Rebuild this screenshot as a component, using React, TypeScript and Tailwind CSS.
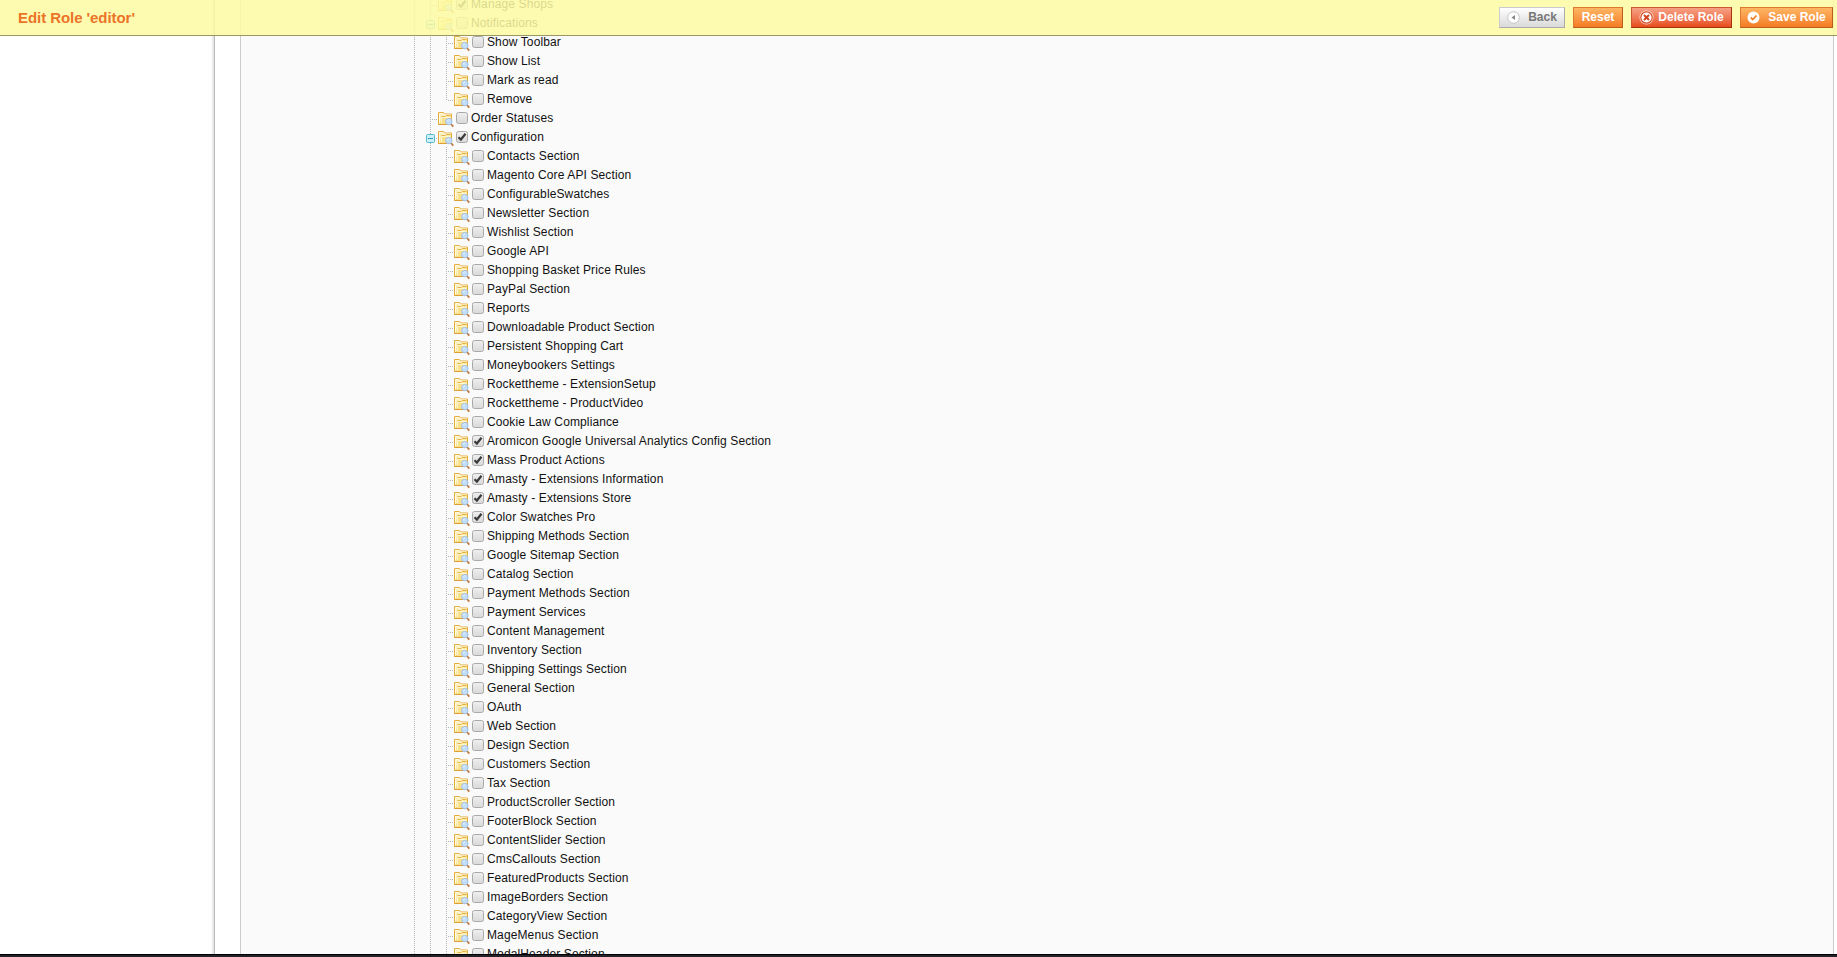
import * as React from "react";
import clsx from "clsx";

type Node = { label: string; level: 1 | 2; checked?: boolean; open?: boolean; last?: boolean };

const section = (label: string, checked = false): Node => ({ label, level: 2, checked });

const NODES: Node[] = [
  { label: "Manage Shops", level: 1, checked: true },
  { label: "Notifications", level: 1, open: true },
  section("Show Toolbar"),
  section("Show List"),
  section("Mark as read"),
  { label: "Remove", level: 2, last: true },
  { label: "Order Statuses", level: 1 },
  { label: "Configuration", level: 1, checked: true, open: true },
  section("Contacts Section"),
  section("Magento Core API Section"),
  section("ConfigurableSwatches"),
  section("Newsletter Section"),
  section("Wishlist Section"),
  section("Google API"),
  section("Shopping Basket Price Rules"),
  section("PayPal Section"),
  section("Reports"),
  section("Downloadable Product Section"),
  section("Persistent Shopping Cart"),
  section("Moneybookers Settings"),
  section("Rockettheme - ExtensionSetup"),
  section("Rockettheme - ProductVideo"),
  section("Cookie Law Compliance"),
  section("Aromicon Google Universal Analytics Config Section", true),
  section("Mass Product Actions", true),
  section("Amasty - Extensions Information", true),
  section("Amasty - Extensions Store", true),
  section("Color Swatches Pro", true),
  section("Shipping Methods Section"),
  section("Google Sitemap Section"),
  section("Catalog Section"),
  section("Payment Methods Section"),
  section("Payment Services"),
  section("Content Management"),
  section("Inventory Section"),
  section("Shipping Settings Section"),
  section("General Section"),
  section("OAuth"),
  section("Web Section"),
  section("Design Section"),
  section("Customers Section"),
  section("Tax Section"),
  section("ProductScroller Section"),
  section("FooterBlock Section"),
  section("ContentSlider Section"),
  section("CmsCallouts Section"),
  section("FeaturedProducts Section"),
  section("ImageBorders Section"),
  section("CategoryView Section"),
  section("MageMenus Section"),
  section("ModalHeader Section"),
];

/** Folder with a magnifier over its lower right corner. */
function FolderIcon() {
  return (
    <svg className="mt-[3px] h-4 w-4 shrink-0" viewBox="0 0 16 16" fill="none">
      <path d="M.5 12.500v-12h5l1 1.500h7v10.500z" fill="#fdf0bd" stroke="#e3ae3f" />
      <path d="M1.500 11.500v-10h3.500l1 1.500h6.500" stroke="#fffae3" />
      <path d="M1.500 12l2-7.500h9.500v7.500z" fill="#f9e08a" />
      <path d="M3.500 4.500h3.500l1-1h4.500" stroke="#e5b346" />
      <path d="M3.500 5.500h9M3.500 6v5" stroke="#fff6cf" />
      <path d="M.5 12.500h10" stroke="#dc9d31" />
      <path d="M13 12l2.300 2.600" stroke="#bd7b44" strokeWidth="1.800" />
      <circle cx="10.800" cy="9.600" r="3.200" fill="#c3def8" stroke="#a3c1e6" />
      <path d="M9.200 9.300a1.700 1.700 0 0 1 1.600-1.500" stroke="#ebf6ff" />
    </svg>
  );
}

function CheckBox({ checked }: { checked?: boolean }) {
  return (
    <span className="mt-[3px] ml-0.5 flex size-3 shrink-0 items-center justify-center rounded-[2.5px] border border-[#a9a9a9] bg-linear-to-b from-[#eee] to-[#dadada]">
      {checked && (
        <svg className="size-2.5 shrink-0" viewBox="0 0 10 10" fill="none">
          <path d="M1.500 5.200l2.400 2.300L8.500 1.700" stroke="#3a3a3a" strokeWidth="2.200" />
        </svg>
      )}
    </span>
  );
}

function Toggle() {
  return (
    <svg className="mt-[6px] -ml-1 h-[9px] w-[9px] shrink-0" viewBox="0 0 9 9" fill="none">
      <rect x=".5" y=".5" width="8" height="8" rx="1" fill="#cdf0f7" stroke="#55b9d0" />
      <path d="M2 4.500h5" stroke="#2e9db9" />
    </svg>
  );
}

/** Vertical dotted guide, one row high. Rows are odd in height, so the dots shift on every other one. */
function Guide({ half, odd }: { half?: boolean; odd: boolean }) {
  return (
    <span className={clsx("flex w-4 shrink-0", half ? "h-[11px]" : "h-[19px]")}>
      <svg className="h-full w-px" shapeRendering="crispEdges">
        <path d="M.5 0V19" stroke="#b4b4b4" strokeDasharray="1 1" strokeDashoffset={odd ? 1 : 0} />
      </svg>
    </span>
  );
}

function Dash({ short }: { short?: boolean }) {
  return (
    <svg
      className={clsx("mt-[10px] h-px shrink-0", short ? "ml-px w-px" : "ml-0.5 w-[5px]")}
      shapeRendering="crispEdges"
    >
      <path d="M0 .5H6" stroke="#b4b4b4" strokeDasharray="1 1" />
    </svg>
  );
}

function Row({ node, odd }: { node: Node; odd: boolean }) {
  return (
    <li className="flex h-[19px] items-start">
      <Guide odd={odd} />
      <Guide odd={odd} />
      {node.level === 2 && <Guide half={node.last} odd={odd} />}
      <span className="-ml-4 flex w-2 shrink-0">
        {node.open && <Toggle />}
        <Dash short={node.open} />
      </span>
      <FolderIcon />
      <CheckBox checked={node.checked} />
      <span className="ml-[3px] leading-[19px] tracking-[0.12px] whitespace-nowrap">{node.label}</span>
    </li>
  );
}

function Button({ tone, children }: { tone: string; children: React.ReactNode }) {
  return (
    <button
      className={clsx(
        "flex h-[21px] items-center justify-center border text-[12px] leading-[17px] font-bold",
        tone,
      )}
    >
      {children}
    </button>
  );
}

export default function App() {
  return (
    <div className="relative flex h-[957px] w-[1837px] flex-col overflow-hidden bg-white font-['Liberation_Sans',Arial,sans-serif] text-[12px] text-[#111]">
      <main className="flex min-h-0 flex-1">
        <aside className="w-[215px] shrink-0 border-r border-[#bbb] bg-linear-to-l from-[#ddd] via-white via-[3px] to-white" />
        <div className="w-[25px] shrink-0" />
        <section className="min-w-0 flex-1 overflow-hidden border-x border-[#ccc] bg-[#fafafa]">
          <ul className="-mt-[5px] ml-[173px]">
            {NODES.map((node, i) => (
              <Row key={node.label} node={node} odd={i % 2 === 1} />
            ))}
          </ul>
        </section>
        <div className="w-[3px] shrink-0" />
      </main>
      <footer className="h-[3px] shrink-0 border-t border-black bg-[#222228]" />

      <header className="absolute inset-x-0 top-0 flex h-9 items-start justify-between border-b border-[#9b9763] bg-[#fdfaa2]/85 pt-[7px] pr-1 pl-[18px]">
        <h3 className="text-[15px] leading-[22px] font-bold tracking-[-0.06px] text-[#eb7428]">Edit Role 'editor'</h3>
        <div className="flex gap-2">
          <Button tone="w-[66px] gap-2 border-[#ccc] border-r-[#aaa] border-b-[#aaa] bg-linear-to-b from-white to-[#d9d9d9] text-[#777]">
            <svg className="size-[13px]" viewBox="0 0 13 13">
              <circle cx="6.500" cy="6.500" r="5.800" fill="#fff" stroke="#c4c4c4" />
              <path d="M8 4v5L4.500 6.500z" fill="#888" />
            </svg>
            Back
          </Button>
          <Button tone="w-[50px] border-[#de7a2c] border-r-[#b85d1c] border-b-[#b85d1c] bg-linear-to-b from-[#fdb663] to-[#f47b20] text-white">
            Reset
          </Button>
          <Button tone="w-[101px] gap-1 border-[#cb5630] border-r-[#a83110] border-b-[#a83110] bg-linear-to-b from-[#f6a184] to-[#e64c19] text-white">
            <svg className="size-[15px] shrink-0" viewBox="0 0 15 15" fill="none">
              <circle cx="7.500" cy="7.500" r="7" fill="#fbdccf" />
              <circle cx="7.500" cy="7.500" r="5.700" fill="#fff" stroke="#d4512c" strokeWidth="1.200" />
              <path d="M5 5l5 5M10 5l-5 5" stroke="#cf4520" strokeWidth="2" />
            </svg>
            Delete Role
          </Button>
          <Button tone="w-[93px] gap-2 border-[#de7a2c] border-r-[#b85d1c] border-b-[#b85d1c] bg-linear-to-b from-[#fdb663] to-[#f47b20] text-white">
            <svg className="size-[13px] shrink-0" viewBox="0 0 13 13" fill="none">
              <circle cx="6.500" cy="6.500" r="6" fill="#fff" />
              <path d="M3.800 6.500l2 2 3.700-4" stroke="#f08028" strokeWidth="1.800" />
            </svg>
            Save Role
          </Button>
        </div>
      </header>
    </div>
  );
}
